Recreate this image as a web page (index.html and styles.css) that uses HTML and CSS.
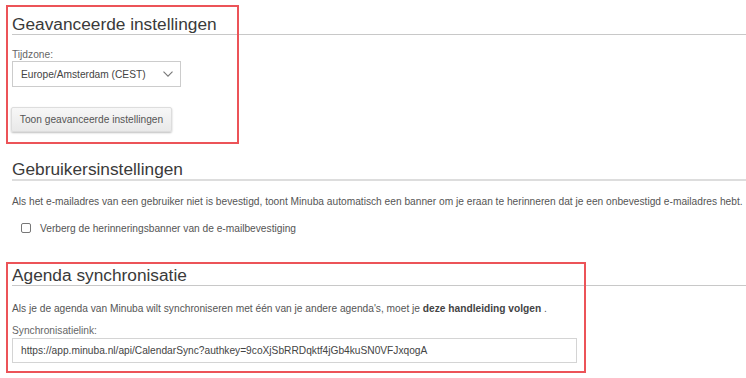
FILE: index.html
```html
<!DOCTYPE html>
<html lang="nl">
<head>
<meta charset="utf-8">
<title>Instellingen</title>
<link rel="stylesheet" href="styles.css">
</head>
<body>
<div class="page">
  <section class="section s-advanced">
    <h2 class="heading">Geavanceerde instellingen</h2>
    <div class="field-label">Tijdzone:</div>
    <div class="select">
      <span class="select-text">Europe/Amsterdam (CEST)</span>
      <svg class="chevron" width="10" height="6" viewBox="0 0 10 6"><path d="M0.5 0.6 L5 5.1 L9.5 0.6" fill="none" stroke="#777" stroke-width="1.1"/></svg>
    </div>
    <button class="btn" type="button">Toon geavanceerde instellingen</button>
  </section>

  <section class="section s-user">
    <h2 class="heading">Gebruikersinstellingen</h2>
    <p class="text">Als het e-mailadres van een gebruiker niet is bevestigd, toont Minuba automatisch een banner om je eraan te herinneren dat je een onbevestigd e-mailadres hebt.</p>
    <label class="check-row"><span class="checkbox"></span><span class="check-label">Verberg de herinneringsbanner van de e-mailbevestiging</span></label>
  </section>

  <section class="section s-sync">
    <h2 class="heading">Agenda synchronisatie</h2>
    <p class="text">Als je de agenda van Minuba wilt synchroniseren met één van je andere agenda's, moet je <b class="strong">deze handleiding volgen</b> .</p>
    <div class="field-label">Synchronisatielink:</div>
    <div class="input">https://app.minuba.nl/api/CalendarSync?authkey=9coXjSbRRDqktf4jGb4kuSN0VFJxqogA</div>
  </section>

  <div class="mark mark-1"></div>
  <div class="mark mark-2"></div>
</div>
</body>
</html>
```

FILE: styles.css
```css
html, body {
  margin: 0;
  padding: 0;
  background: #ffffff;
}

body {
  font-family: "Liberation Sans", Arial, sans-serif;
  color: #555555;
  width: 746px;
  height: 378px;
  overflow: hidden;
}

.page {
  position: relative;
  padding: 14px 0 0 12px;
}

.heading {
  margin: 0;
  font-size: 17.3px;
  line-height: 20px;
  font-weight: normal;
  color: #3a3a3a;
  border-bottom: 1px solid #c8c8c8;
}

.field-label {
  font-size: 10.2px;
  line-height: 12px;
  color: #666666;
}

.s-advanced .field-label {
  margin-top: 14px;
}

.select {
  box-sizing: border-box;
  width: 169px;
  height: 26px;
  border: 1px solid #cccccc;
  background: #ffffff;
  display: flex;
  align-items: center;
  padding: 0 7px 0 8px;
}

.select-text {
  font-size: 10.2px;
  color: #444444;
  white-space: nowrap;
}

.chevron {
  display: block;
  margin-left: auto;
}

.btn {
  display: block;
  box-sizing: border-box;
  margin: 20px 0 0 -1px;
  width: 161px;
  height: 25px;
  padding: 0;
  border: 1px solid #dddddd;
  border-radius: 2px;
  background: linear-gradient(#f7f7f7, #e9e9e9);
  box-shadow: 0 1px 2px rgba(0, 0, 0, 0.25);
  font-family: "Liberation Sans", Arial, sans-serif;
  font-size: 10.2px;
  color: #555555;
  white-space: nowrap;
}

.s-user {
  margin-top: 27px;
}

.s-user .heading {
  border-bottom: 2px solid #dddddd;
}

.text {
  margin: 15px 0 0 0;
  font-size: 10.2px;
  line-height: 12px;
  color: #555555;
  white-space: nowrap;
}

.strong {
  font-weight: bold;
  color: #444444;
}

.check-row {
  display: flex;
  align-items: center;
  margin: 14px 0 0 9px;
  height: 12px;
}

.checkbox {
  box-sizing: border-box;
  width: 10px;
  height: 10px;
  border: 1px solid #777777;
  border-radius: 2px;
  background: #ffffff;
}

.check-label {
  margin-left: 9px;
  font-size: 10.2px;
  color: #555555;
}

.s-sync {
  margin-top: 31px;
}

.s-sync .text {
  margin-top: 17px;
}

.s-sync .field-label {
  margin-top: 10px;
}

.input {
  box-sizing: border-box;
  margin-top: 1px;
  width: 565px;
  height: 25px;
  border: 1px solid #d4d4d4;
  padding: 0 8px;
  display: flex;
  align-items: center;
  font-size: 10.2px;
  color: #444444;
  white-space: nowrap;
}

.mark {
  position: absolute;
  box-sizing: border-box;
  border: 2px solid #ec5358;
}

.mark-1 {
  left: 6px;
  top: 5px;
  width: 233px;
  height: 139px;
}

.mark-2 {
  left: 6px;
  top: 262px;
  width: 580px;
  height: 111px;
}
```
